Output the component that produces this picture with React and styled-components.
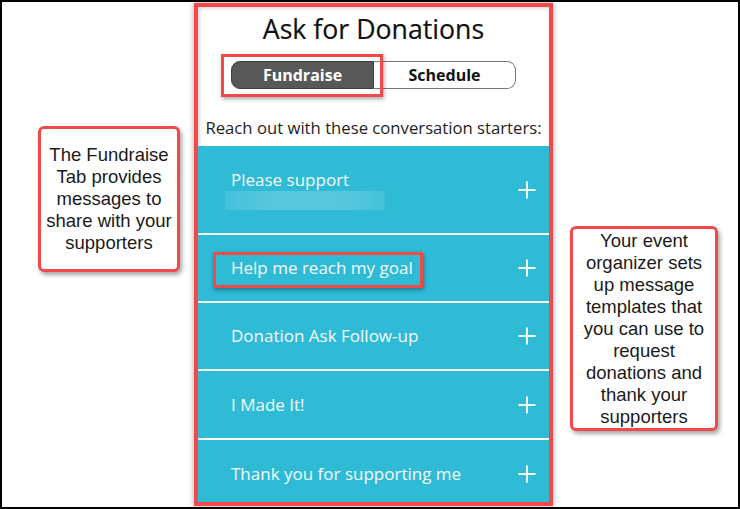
import React from 'react';
import styled, { createGlobalStyle } from 'styled-components';

const GlobalStyle = createGlobalStyle`
  html, body {
    margin: 0;
    padding: 0;
    background: #ffffff;
  }
`;

const annotationRed = '#f24a4a';
const rowBlue = '#2fbad6';

const Frame = styled.div`
  width: 740px;
  height: 509px;
  box-sizing: border-box;
  border: 2px solid #000;
  background: #fff;
  display: flex;
  align-items: flex-start;
  overflow: hidden;
`;

const SideColumn = styled.div`
  box-sizing: border-box;
  width: ${(p) => p.width}px;
  padding-top: ${(p) => p.top}px;
  padding-left: ${(p) => p.left}px;
  flex-shrink: 0;
`;

const Callout = styled.div`
  box-sizing: border-box;
  width: ${(p) => p.width}px;
  padding: ${(p) => p.pad};
  border: 3px solid ${annotationRed};
  border-radius: 6px;
  background: #fff;
  box-shadow: 2px 3px 4px rgba(0, 0, 0, 0.35);
  font-family: 'Liberation Sans', Arial, sans-serif;
  font-size: 18.5px;
  line-height: 22px;
  color: #1a1a1a;
  text-align: center;
  white-space: nowrap;
`;

const Phone = styled.div`
  position: relative;
  box-sizing: border-box;
  width: 359px;
  height: 503px;
  margin-top: 1px;
  flex-shrink: 0;
  border: 4px solid ${annotationRed};
  background: #fff;
  box-shadow: 0 0 6px rgba(0, 0, 0, 0.35), inset 1px 1px 4px rgba(0, 0, 0, 0.2);
  display: flex;
  flex-direction: column;
  align-items: center;
  padding-top: 5px;
  font-family: 'Open Sans', 'Noto Sans', sans-serif;
  overflow: hidden;
`;

const Title = styled.h1`
  margin: 0;
  font-size: 26.7px;
  line-height: 34px;
  font-weight: 400;
  color: #111;
  -webkit-text-stroke: 0.2px #111;
`;

const Toggle = styled.div`
  position: relative;
  display: flex;
  margin-top: 15px;
  width: 285px;
  height: 28px;
`;

const ToggleTab = styled.div`
  box-sizing: border-box;
  flex: 1;
  display: flex;
  align-items: center;
  justify-content: center;
  font-size: 16px;
  font-weight: 700;
  color: ${(p) => (p.active ? '#fff' : '#111')};
  background: ${(p) => (p.active ? '#585858' : '#fff')};
  border: 1px solid ${(p) => (p.active ? '#3e3e3e' : '#777')};
  border-radius: ${(p) => (p.active ? '9px 0 0 9px' : '0 9px 9px 0')};
  ${(p) => (p.active ? '' : 'border-left: none;')}
`;

const Highlight = styled.div`
  position: absolute;
  left: ${(p) => p.x}px;
  top: ${(p) => p.y}px;
  width: ${(p) => p.w}px;
  height: ${(p) => p.h}px;
  box-sizing: border-box;
  border: 3px solid ${annotationRed};
  box-shadow: 1px 2px 4px rgba(0, 0, 0, 0.35);
  pointer-events: none;
`;

const Intro = styled.p`
  margin: 28px 0 7px;
  font-size: 16.7px;
  line-height: 22px;
  color: #1e1e1e;
  white-space: nowrap;
`;

const List = styled.div`
  align-self: stretch;
  flex: 1;
  min-height: 0;
  display: flex;
  flex-direction: column;
  gap: 2px;
  overflow: hidden;
`;

const Row = styled.div`
  position: relative;
  flex: none;
  height: ${(p) => p.h}px;
  background: ${rowBlue};
  display: flex;
  align-items: center;
  justify-content: space-between;
  padding: 0 13px 0 33px;
`;

const RowText = styled.div`
  display: flex;
  flex-direction: column;
`;

const Label = styled.span`
  font-size: 17px;
  line-height: 22px;
  color: #f4fbfd;
`;

const Redacted = styled.div`
  margin-left: -6px;
  width: 160px;
  height: 19px;
  background: linear-gradient(
    90deg,
    rgba(255, 255, 255, 0.1),
    rgba(255, 255, 255, 0.2) 30%,
    rgba(255, 255, 255, 0.2) 70%,
    rgba(255, 255, 255, 0.1)
  );
`;

const PlusIcon = () => (
  <svg width="18" height="18" viewBox="0 0 18 18">
    <path d="M9 0.5v17M0.5 9h17" stroke="#f4fbfd" strokeWidth="2" fill="none" />
  </svg>
);

const templates = [
  { label: 'Please support', h: 87, redacted: true },
  { label: 'Help me reach my goal', h: 66, boxed: true },
  { label: 'Donation Ask Follow-up', h: 66 },
  { label: 'I Made It!', h: 67 },
  { label: 'Thank you for supporting me', h: 68 },
];

const App = () => (
  <>
    <GlobalStyle />
    <Frame>
      <SideColumn width={192} top={124} left={36}>
        <Callout width={142} pad="15px 0">
          The Fundraise<br />
          Tab provides<br />
          messages to<br />
          share with your<br />
          supporters
        </Callout>
      </SideColumn>

      <Phone>
        <Title>Ask for Donations</Title>
        <Toggle>
          <ToggleTab active>Fundraise</ToggleTab>
          <ToggleTab>Schedule</ToggleTab>
          <Highlight x={-10} y={-7} w={162} h={43} />
        </Toggle>
        <Intro>Reach out with these conversation starters:</Intro>
        <List>
          {templates.map((t) => (
            <Row key={t.label} h={t.h}>
              <RowText>
                <Label>{t.label}</Label>
                {t.redacted && <Redacted />}
              </RowText>
              <PlusIcon />
              {t.boxed && <Highlight x={15} y={17} w={210} h={36} />}
            </Row>
          ))}
        </List>
      </Phone>

      <SideColumn width={185} top={224} left={17}>
        <Callout width={148} pad="1px 0 0">
          Your event<br />
          organizer sets<br />
          up message<br />
          templates that<br />
          you can use to<br />
          request<br />
          donations and<br />
          thank your<br />
          supporters
        </Callout>
      </SideColumn>
    </Frame>
  </>
);

export default App;
